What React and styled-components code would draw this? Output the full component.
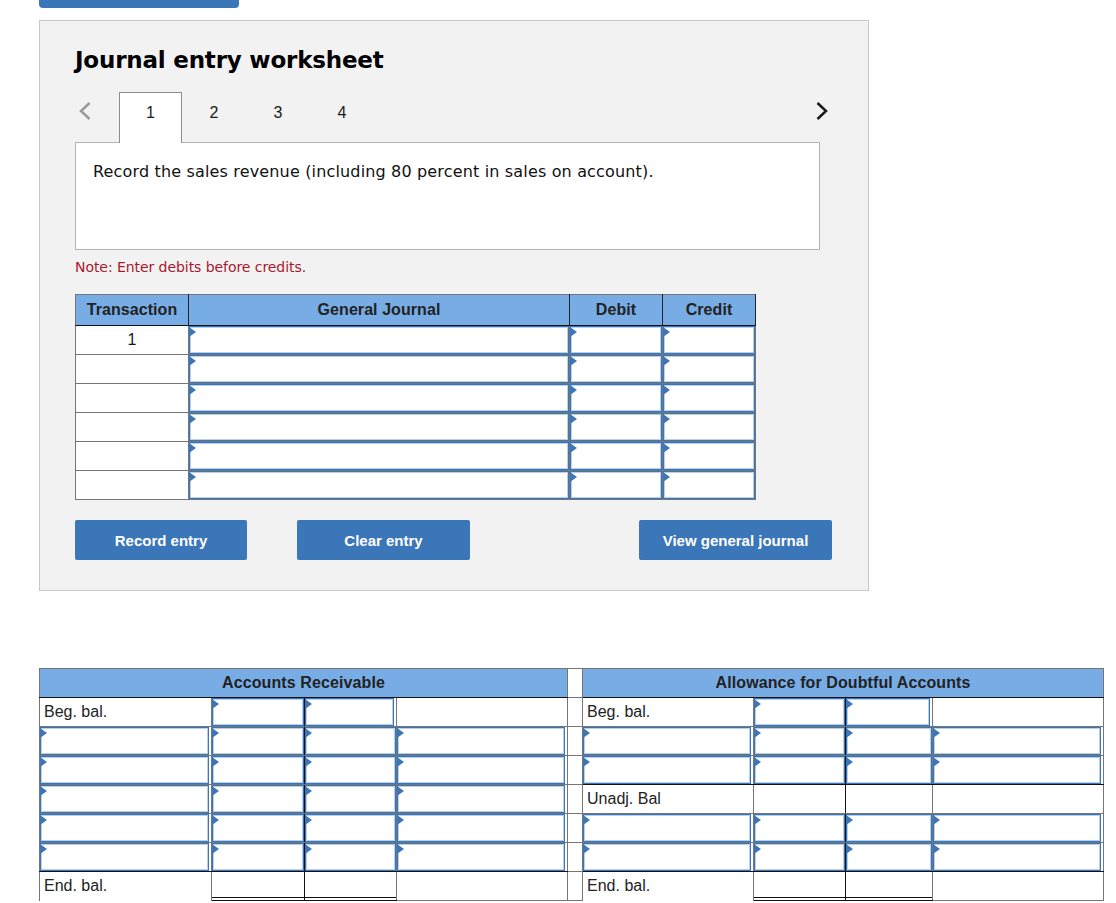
import React from "react";
import styled, { createGlobalStyle } from "styled-components";

const GlobalStyle = createGlobalStyle`
  html, body {
    margin: 0;
    padding: 0;
    background: #fff;
    font-family: "Liberation Sans", Arial, sans-serif;
    color: #1a1a1a;
  }
  * { box-sizing: border-box; }
`;

const journalRows = ["1", "", "", "", "", ""];

const leftRows = [
  { label: "Beg. bal." },
  {},
  {},
  {},
  {},
  { blackBottom: true },
  { label: "End. bal.", total: true },
];
const rightRows = [
  { label: "Beg. bal." },
  {},
  { blackBottom: true },
  { label: "Unadj. Bal", plain: true },
  {},
  { blackBottom: true },
  { label: "End. bal.", total: true },
];

const InputCell = ({ blackRight, blackBottom, inset }) => (
  <FieldTd $blackRight={blackRight} $blackBottom={blackBottom}>
    <Field $inset={inset} />
  </FieldTd>
);

const TAccountCells = ({ row }) => {
  if (row.total) {
    return (
      <>
        <LabelTd $open>{row.label}</LabelTd>
        <TotalTd $blackRight>
          <TotalInner />
        </TotalTd>
        <TotalTd>
          <TotalInner />
        </TotalTd>
        <BlankTd />
      </>
    );
  }
  if (row.plain) {
    return (
      <>
        <LabelTd>{row.label}</LabelTd>
        <BlankTd $blackRight />
        <BlankTd />
        <BlankTd />
      </>
    );
  }
  if (row.label) {
    return (
      <>
        <LabelTd>{row.label}</LabelTd>
        <InputCell blackRight />
        <InputCell inset />
        <BlankTd />
      </>
    );
  }
  return (
    <>
      <InputCell inset blackBottom={row.blackBottom} />
      <InputCell blackRight blackBottom={row.blackBottom} />
      <InputCell blackBottom={row.blackBottom} />
      <InputCell inset blackBottom={row.blackBottom} />
    </>
  );
};

export default function App() {
  return (
    <Page>
      <GlobalStyle />
      <TopButton />
      <Worksheet>
        <Title>Journal entry worksheet</Title>
        <TabBar>
          <Chevron viewBox="0 0 14 20" $muted>
            <path d="M11.5 2 3 10l8.500 8" />
          </Chevron>
          <Tab $active>1</Tab>
          <Tab>2</Tab>
          <Tab>3</Tab>
          <Tab>4</Tab>
          <NextChevron viewBox="0 0 14 20">
            <path d="M2.500 2 11 10l-8.500 8" />
          </NextChevron>
        </TabBar>
        <Prompt>Record the sales revenue (including 80 percent in sales on account).</Prompt>
        <Note>Note: Enter debits before credits.</Note>
        <JournalTable>
          <colgroup>
            <col width="113" />
            <col width="381" />
            <col width="93" />
            <col width="93" />
          </colgroup>
          <thead>
            <tr>
              <JournalHead>Transaction</JournalHead>
              <JournalHead>General Journal</JournalHead>
              <JournalHead>Debit</JournalHead>
              <JournalHead>Credit</JournalHead>
            </tr>
          </thead>
          <tbody>
            {journalRows.map((num, i) => (
              <tr key={i}>
                <NumberTd>{num}</NumberTd>
                <InputCell />
                <InputCell />
                <InputCell />
              </tr>
            ))}
          </tbody>
        </JournalTable>
        <Actions>
          <ActionButton $w={172}>Record entry</ActionButton>
          <ActionButton $w={173} $ml={50}>Clear entry</ActionButton>
          <ActionButton $w={193} $ml={169}>View general journal</ActionButton>
        </Actions>
      </Worksheet>
      <LedgerTable>
        <colgroup>
          <col width="172" />
          <col width="93" />
          <col width="92" />
          <col width="171" />
          <col width="15" />
          <col width="171" />
          <col width="92" />
          <col width="87" />
          <col width="171" />
        </colgroup>
        <thead>
          <tr>
            <LedgerHead colSpan={4}>Accounts Receivable</LedgerHead>
            <SpacerHead />
            <LedgerHead colSpan={4}>Allowance for Doubtful Accounts</LedgerHead>
          </tr>
        </thead>
        <tbody>
          {leftRows.map((row, i) => (
            <tr key={i}>
              <TAccountCells row={row} />
              <SpacerTd />
              <TAccountCells row={rightRows[i]} />
            </tr>
          ))}
        </tbody>
      </LedgerTable>
    </Page>
  );
}

const Page = styled.div`
  padding-left: 39px;
  width: 1116px;
  height: 903px;
  overflow: hidden;
`;

const TopButton = styled.div`
  width: 200px;
  height: 8px;
  background: #3b76b9;
  border-radius: 0 0 4px 4px;
`;

const Worksheet = styled.section`
  width: 830px;
  height: 571px;
  margin-top: 12px;
  padding: 0 35px;
  background: #f2f2f2;
  border: 1px solid #c8c8c8;
`;

const Title = styled.h2`
  margin: 0;
  padding-top: 24px;
  height: 71px;
  font: bold 23px/30px "DejaVu Sans", Verdana, sans-serif;
  letter-spacing: -0.2px;
  color: #000;
`;

const TabBar = styled.div`
  position: relative;
  z-index: 1;
  display: flex;
  width: 745px;
  height: 51px;
  padding-left: 44px;
`;

const Chevron = styled.svg`
  position: absolute;
  left: 3px;
  top: 9px;
  width: 14px;
  height: 20px;
  fill: none;
  stroke: ${({ $muted }) => ($muted ? "#9a9a9a" : "#1a1a1a")};
  stroke-width: 2.500;
`;

const NextChevron = styled(Chevron)`
  left: auto;
  right: -9px;
`;

const Tab = styled.div`
  width: 64px;
  height: 51px;
  padding-top: 10px;
  text-align: center;
  font-size: 16px;
  line-height: 20px;
  color: #1a1a1a;
  border: 1px solid transparent;
  border-bottom: 0;
  ${({ $active }) =>
    $active &&
    `
    width: 63px;
    background: #fff;
    border-color: #8c8c8c;
  `}
`;

const Prompt = styled.div`
  width: 745px;
  height: 108px;
  margin-top: -1px;
  padding: 17px 17px 0;
  background: #fff;
  border: 1px solid #b3b3b3;
  font: 16px/24px "DejaVu Sans", Verdana, sans-serif;
  letter-spacing: 0.16px;
  color: #111;
`;

const Note = styled.div`
  margin-top: 8px;
  height: 36px;
  font: 14px/18px "DejaVu Sans", Verdana, sans-serif;
  letter-spacing: -0.06px;
  color: #a6192e;
`;

const JournalTable = styled.table`
  width: 681px;
  table-layout: fixed;
  border-collapse: collapse;
  background: #fff;
  border: 1px solid #757575;
`;

const JournalHead = styled.th`
  height: 31px;
  padding: 0;
  background: #78ace5;
  border-left: 1px solid #222;
  border-bottom: 1px solid #111;
  font-size: 16px;
  font-weight: bold;
  letter-spacing: 0.07px;
  color: #222;
  &:first-child { border-left: 0; }
  &:last-child { border-right: 1px solid #222; }
`;

const NumberTd = styled.td`
  height: 29px;
  padding: 0;
  text-align: center;
  font-size: 16px;
  border: 1px solid #757575;
`;

const FieldTd = styled.td`
  height: 29px;
  padding: 0;
  border: 1px solid #757575;
  border-right-color: ${({ $blackRight }) => ($blackRight ? "#111" : "#757575")};
  border-bottom-color: ${({ $blackBottom }) => ($blackBottom ? "#111" : "#757575")};
`;

const Field = styled.div`
  position: relative;
  height: 28px;
  margin-right: ${({ $inset }) => ($inset ? "2px" : "0")};
  background: #fff;
  border: 1px solid #3b76b9;
  box-shadow: inset 0 0 0 1px #b9d0ec;
  &::before {
    content: "";
    position: absolute;
    left: -1px;
    top: 0;
    border-left: 7px solid #3b76b9;
    border-top: 5.500px solid transparent;
    border-bottom: 5.500px solid transparent;
  }
`;

const Actions = styled.div`
  display: flex;
  margin-top: 20px;
`;

const ActionButton = styled.button`
  width: ${({ $w }) => $w}px;
  height: 40px;
  margin-left: ${({ $ml }) => $ml || 0}px;
  padding: 1px 0 0;
  background: #3b76b9;
  border: 0;
  border-radius: 2px;
  color: #fff;
  font: bold 15px "Liberation Sans", Arial, sans-serif;
`;

const LedgerTable = styled.table`
  width: 1065px;
  margin-top: 77px;
  table-layout: fixed;
  border-collapse: collapse;
  background: #fff;
  border-left: 1px solid #757575;
  border-top: 1px solid #757575;
`;

const LedgerHead = styled.th`
  height: 29px;
  padding: 0;
  background: #78ace5;
  border-bottom: 1px solid #111;
  border-right: 1px solid #757575;
  font-size: 16px;
  font-weight: bold;
  letter-spacing: 0.1px;
  color: #222;
`;

const SpacerHead = styled.th`
  padding: 0;
  background: #fff;
  border-right: 1px solid #757575;
  border-bottom: 1px solid #757575;
`;

const SpacerTd = styled.td`
  padding: 0;
  border: 1px solid #757575;
  &:last-child { border-bottom: 0; }
`;

const LabelTd = styled.td`
  height: 29px;
  padding: 0 0 1px 4px;
  font-size: 16px;
  color: #222;
  border-right: 1px solid #757575;
  border-bottom: ${({ $open }) => ($open ? "0" : "1px solid #757575")};
`;

const BlankTd = styled.td`
  height: 29px;
  padding: 0;
  border-right: 1px solid ${({ $blackRight }) => ($blackRight ? "#111" : "#757575")};
  border-bottom: 1px solid #757575;
`;

const TotalTd = styled.td`
  height: 29px;
  padding: 0;
  vertical-align: top;
  border-right: 1px solid ${({ $blackRight }) => ($blackRight ? "#111" : "#757575")};
  border-bottom: 1px solid #111;
`;

const TotalInner = styled.div`
  height: 26px;
  border-bottom: 1px solid #111;
`;
